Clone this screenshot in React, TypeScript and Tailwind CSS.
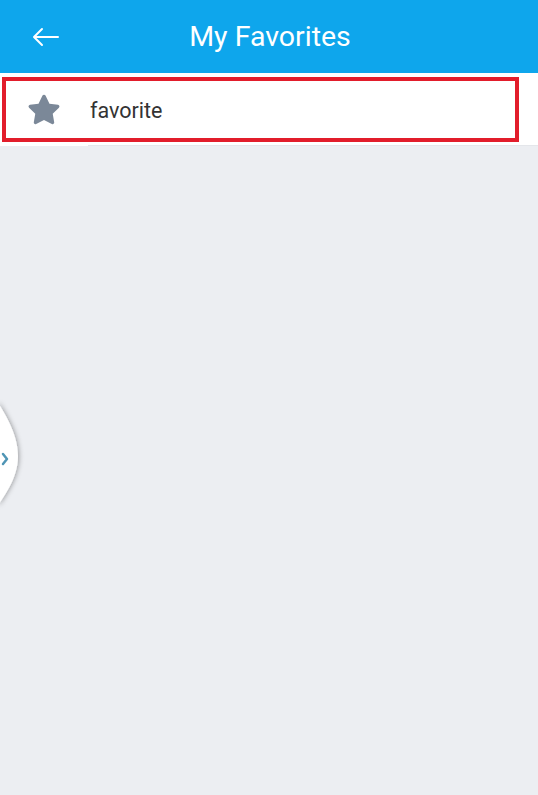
import React from "react";

function Star() {
  return (
    <svg width="36" height="34" viewBox="0 0 24 23" className="block">
      <path
        d="M12 1.2c.5 0 .9.3 1.1.7l2.6 5.3 5.8.8c.9.1 1.3 1.3.6 1.9l-4.2 4.1 1 5.8c.2.9-.8 1.6-1.6 1.2L12 18.3l-5.3 2.7c-.8.4-1.8-.3-1.6-1.2l1-5.8L1.9 9.9c-.7-.6-.3-1.8.6-1.9l5.8-.8 2.6-5.3c.2-.4.6-.7 1.1-.7z"
        fill="#7b8898"
      />
    </svg>
  );
}

export default function App() {
  return (
    <div
      className="relative w-[538px] h-[795px] bg-[#eceef2] overflow-hidden"
      style={{ fontFamily: "Roboto, 'Noto Sans', sans-serif" }}
    >
      <header className="relative h-[73px] bg-[#0ea6ec] flex items-center justify-center">
        <svg
          className="absolute left-[32px] top-[27px]"
          width="28"
          height="20"
          viewBox="0 0 28 20"
          fill="none"
          stroke="#ffffff"
          strokeWidth="2"
          strokeLinecap="round"
          strokeLinejoin="round"
        >
          <path d="M26 10H3" />
          <path d="M10 2L2 10l8 8" />
        </svg>
        <h1 className="text-[28.5px] text-white font-normal leading-none mt-[2px] ml-[2px]">My Favorites</h1>
      </header>
      <div className="bg-white h-[73px] pt-[4px] relative">
        <div className="ml-[2px] w-[517px] h-[65px] border-[4px] border-[#e21d2b] flex items-center">
          <div className="w-[84px] flex items-center pl-[20px]">
            <Star />
          </div>
          <span className="text-[21.5px] text-[#333333] leading-none mt-[2px]">favorite</span>
        </div>
        <div className="absolute left-[88px] right-0 bottom-0 h-px bg-[#e4e6ea]" />
      </div>
      <div className="absolute left-0 top-[396px]">
        <svg width="36" height="116" viewBox="0 0 36 116" className="block overflow-visible">
          <defs>
            <filter id="sh" x="-50%" y="-20%" width="200%" height="140%">
              <feDropShadow dx="1" dy="0" stdDeviation="2.5" floodColor="#000" floodOpacity="0.35" />
            </filter>
          </defs>
          <path
            d="M-2 6 C 2 14, 18 36, 18 60 C 18 84, 2 102, -2 110 Z"
            fill="#ffffff"
            filter="url(#sh)"
          />
          <path
            d="M3 58 L7 63 L3 68"
            stroke="#4f95b5"
            strokeWidth="2.5"
            fill="none"
            strokeLinecap="round"
            strokeLinejoin="round"
          />
        </svg>
      </div>
    </div>
  );
}
